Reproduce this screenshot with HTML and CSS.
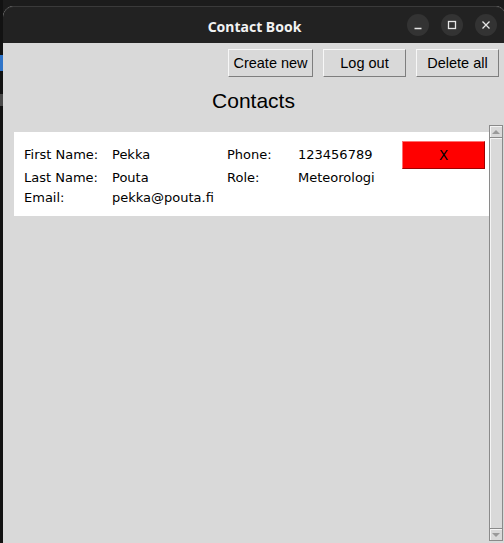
FILE: index.html
```html
<!DOCTYPE html>
<html lang="en">
<head>
<meta charset="utf-8">
<title>Contact Book</title>
<link rel="stylesheet" href="styles.css">
</head>
<body>
<div class="desktop">
  <div class="dock-bit dock-blue"></div>
  <div class="dock-bit dock-ring"></div>
  <div class="window">
    <header class="titlebar">
      <span></span>
      <span class="title">Contact Book</span>
      <div class="controls">
        <span class="ctl"><svg width="22" height="22" viewBox="0 0 22 22"><path d="M7.5 14.5h7" stroke="#e6e6e6" stroke-width="1.3" fill="none"/></svg></span>
        <span class="ctl"><svg width="22" height="22" viewBox="0 0 22 22"><rect x="7.5" y="7.5" width="7" height="7" stroke="#e6e6e6" stroke-width="1.3" fill="none"/></svg></span>
        <span class="ctl"><svg width="22" height="22" viewBox="0 0 22 22"><path d="M7.5 7.5l7 7M14.5 7.5l-7 7" stroke="#e6e6e6" stroke-width="1.3" fill="none"/></svg></span>
      </div>
    </header>
    <main class="content">
      <div class="toolbar">
        <button class="btn btn-create">Create new</button>
        <button class="btn btn-logout">Log out</button>
        <button class="btn btn-delete">Delete all</button>
      </div>
      <h1 class="heading">Contacts</h1>
      <div class="list">
        <div class="canvas">
          <div class="card">
            <span class="lbl r1">First Name:</span>
            <span class="val r1">Pekka</span>
            <span class="lbl r1">Phone:</span>
            <span class="val r1">123456789</span>
            <button class="xbtn">X</button>
            <span class="lbl r2">Last Name:</span>
            <span class="val r2">Pouta</span>
            <span class="lbl r2">Role:</span>
            <span class="val r2">Meteorologi</span>
            <span class="r2"></span>
            <span class="lbl r3">Email:</span>
            <span class="val r3">pekka@pouta.fi</span>
          </div>
        </div>
        <div class="scrollbar">
          <div class="arrow up"><span class="tri-up"></span></div>
          <div class="trough"></div>
          <div class="arrow down"><span class="tri-down"></span></div>
        </div>
      </div>
    </main>
  </div>
</div>
</body>
</html>
```
FILE: styles.css
```css
html, body {
  margin: 0;
  padding: 0;
}
body {
  background: #1c1c1c;
  width: 504px;
  height: 543px;
  overflow: hidden;
}
.desktop {
  position: relative;
  height: 543px;
  box-sizing: border-box;
  padding: 6px 0 0 3px;
  background: linear-gradient(to right, #121212 0, #121212 3px, #1c1c1c 3px);
}
.dock-bit {
  position: absolute;
  left: 0;
  width: 3px;
}
.dock-blue {
  top: 55px;
  height: 16px;
  background: #2f74c8;
}
.dock-ring {
  top: 94px;
  height: 12px;
  background: #4a4a4a;
}
.window {
  width: 503px;
  height: 537px;
  border-radius: 11px 11px 0 0;
  overflow: hidden;
  background: #d9d9d9;
  display: flex;
  flex-direction: column;
}
.titlebar {
  flex: none;
  height: 37px;
  box-sizing: border-box;
  background: #222222;
  box-shadow: inset 0 1px 0 #3a3a3a;
  border-radius: 11px 11px 0 0;
  display: grid;
  grid-template-columns: 1fr auto 1fr;
  align-items: center;
  padding-top: 1px;
}
.title {
  font-family: "Noto Sans", "DejaVu Sans", sans-serif;
  font-weight: 700;
  font-size: 14px;
  color: #f2f2f2;
  padding-top: 2px;
}
.controls {
  justify-self: end;
  display: flex;
  gap: 12px;
  padding-right: 9px;
}
.ctl {
  width: 22px;
  height: 22px;
  border-radius: 50%;
  background: #333333;
  display: block;
}
.ctl svg {
  display: block;
}
.content {
  flex: 1;
  display: flex;
  flex-direction: column;
  min-height: 0;
}
.toolbar {
  display: flex;
  justify-content: flex-end;
  gap: 10px;
  padding: 6px 7px 0 0;
}
.btn {
  height: 28px;
  box-sizing: border-box;
  margin: 0;
  padding: 0;
  font-family: "Liberation Sans", Arial, sans-serif;
  font-size: 14.5px;
  color: #000;
  background: #d9d9d9;
  border: 1px solid;
  border-color: #f7f7f7 #7e7e7e #7e7e7e #f7f7f7;
  border-radius: 0;
}
.btn-create { width: 85px; }
.btn-logout { width: 83px; }
.btn-delete { width: 83px; }
.heading {
  margin: 13px 0 0 0;
  font-family: "Liberation Sans", Arial, sans-serif;
  font-weight: 400;
  font-size: 21px;
  line-height: 22px;
  text-align: center;
  color: #000;
  padding-right: 2px;
}
.list {
  flex: 1;
  display: flex;
  margin-top: 13px;
  padding: 0 3px 2px 0;
  min-height: 0;
}
.canvas {
  flex: 1;
  padding: 7px 0 0 11px;
}
.card {
  background: #ffffff;
  height: 84px;
  box-sizing: border-box;
  padding: 9px 4px 0 10px;
  display: grid;
  grid-template-columns: 88px 115px 71px 104px 83px;
  grid-template-rows: 28px 18px auto;
  font-family: "DejaVu Sans", sans-serif;
  font-size: 13px;
  color: #000;
}
.r1 {
  line-height: 28px;
}
.r2 {
  line-height: 18px;
}
.r3 {
  line-height: 16px;
  padding-top: 3px;
}
.lbl, .val {
  white-space: nowrap;
}
.xbtn {
  height: 28px;
  box-sizing: border-box;
  margin: 0;
  padding: 0;
  background: #ff0000;
  border: 1px solid;
  border-color: #ff7070 #a00000 #a00000 #ff7070;
  font-family: "DejaVu Sans", sans-serif;
  font-size: 13.5px;
  color: #000;
  border-radius: 0;
}
.scrollbar {
  width: 14px;
  box-sizing: border-box;
  border: 1px solid #8a8a8a;
  background: #d9d9d9;
  display: flex;
  flex-direction: column;
}
.arrow {
  height: 11px;
  flex: none;
  display: flex;
  align-items: center;
  justify-content: center;
  box-shadow: inset 1px 1px 0 #f4f4f4;
}
.arrow.up {
  border-bottom: 1px solid #8a8a8a;
}
.arrow.down {
  border-top: 1px solid #8a8a8a;
}
.trough {
  flex: 1;
  box-shadow: inset 1px 1px 0 #f4f4f4;
}
.tri-up {
  width: 0;
  height: 0;
  border-left: 4px solid transparent;
  border-right: 4px solid transparent;
  border-bottom: 4px solid #9a9a9a;
}
.tri-down {
  width: 0;
  height: 0;
  border-left: 4px solid transparent;
  border-right: 4px solid transparent;
  border-top: 4px solid #9a9a9a;
}
```
